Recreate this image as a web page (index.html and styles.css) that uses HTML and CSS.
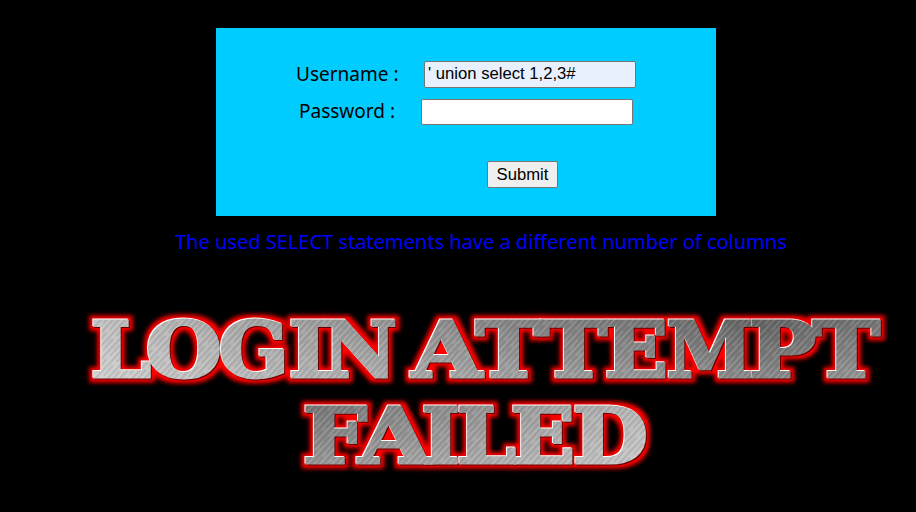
FILE: index.html
```html
<!DOCTYPE html>
<html lang="en">
<head>
<meta charset="utf-8">
<title>Login</title>
<link rel="stylesheet" href="styles.css">
</head>
<body>
<form class="login">
  <div class="row username"><label for="uname">Username :</label><input id="uname" class="filled" type="text" value="' union select 1,2,3#"></div>
  <div class="row password"><label for="passwd">Password :</label><input id="passwd" type="password"></div>
  <button type="button">Submit</button>
</form>
<p class="message"><span>The used SELECT statements have a different number of columns</span></p>
<svg class="banner" width="916" height="212" viewBox="0 300 916 212">
  <defs>
    <linearGradient id="top" gradientUnits="userSpaceOnUse" x1="92" y1="0" x2="880" y2="0">
      <stop offset="0" stop-color="#c2c2c2"/><stop offset=".2" stop-color="#a6a6a6"/><stop offset=".45" stop-color="#8c8c8c"/><stop offset=".7" stop-color="#777"/><stop offset=".85" stop-color="#636363"/><stop offset="1" stop-color="#777"/>
    </linearGradient>
    <linearGradient id="bottom" gradientUnits="userSpaceOnUse" x1="305" y1="0" x2="645" y2="0">
      <stop offset="0" stop-color="#757575"/><stop offset=".5" stop-color="#929292"/><stop offset="1" stop-color="#b9b9b9"/>
    </linearGradient>
    <linearGradient id="sheen" x1="0" y1="0" x2="0" y2="1"><stop offset="0" stop-color="#fff" stop-opacity="0"/><stop offset="1" stop-color="#fff" stop-opacity=".25"/></linearGradient>
    <pattern id="brush" width="19" height="9" patternUnits="userSpaceOnUse" patternTransform="rotate(-47)">
      <path d="M0 1.5H19M0 6.5H12" stroke="#fff" stroke-opacity=".2" stroke-width=".8"/>
      <path d="M0 3.8H19M5 8H19" stroke="#000" stroke-opacity=".17" stroke-width=".9"/>
    </pattern>
    <pattern id="metal" width="916" height="512" patternUnits="userSpaceOnUse">
      <rect width="916" height="395" fill="url(#top)"/>
      <rect y="395" width="916" height="117" fill="url(#bottom)"/>
      <rect y="320" width="916" height="60" fill="url(#sheen)"/>
      <rect y="405" width="916" height="60" fill="url(#sheen)"/>
      <rect width="916" height="512" fill="url(#brush)"/>
    </pattern>
    <filter id="glow" filterUnits="userSpaceOnUse" x="70" y="300" width="840" height="190" color-interpolation-filters="sRGB">
      <feMorphology in="SourceAlpha" operator="dilate" radius="4" result="fat"/>
      <feGaussianBlur in="fat" stdDeviation="2" result="soft"/>
      <feFlood flood-color="#f00"/><feComposite in2="soft" operator="in" result="red"/>
      <feOffset in="SourceAlpha" dx="-.8" dy="-.8" result="up"/>
      <feFlood flood-color="#fff"/><feComposite in2="up" operator="in" result="light"/>
      <feOffset in="SourceAlpha" dx=".7" dy=".6" result="down"/>
      <feFlood flood-color="#600"/><feComposite in2="down" operator="in" result="dark"/>
      <feMerge><feMergeNode in="red"/><feMergeNode in="dark"/><feMergeNode in="light"/><feMergeNode in="SourceGraphic"/></feMerge>
    </filter>
  </defs>
  <g class="metal" filter="url(#glow)">
    <text y="377"><tspan x="91" textLength="60" lengthAdjust="spacingAndGlyphs">L</tspan><tspan x="146" textLength="76" lengthAdjust="spacingAndGlyphs">O</tspan><tspan x="219" textLength="70" lengthAdjust="spacingAndGlyphs">G</tspan><tspan x="289" textLength="39" lengthAdjust="spacingAndGlyphs">I</tspan><tspan x="323" textLength="74" lengthAdjust="spacingAndGlyphs">N</tspan></text>
    <text y="377"><tspan x="412" textLength="70" lengthAdjust="spacingAndGlyphs">A</tspan><tspan x="476" textLength="66" lengthAdjust="spacingAndGlyphs">T</tspan><tspan x="541" textLength="66" lengthAdjust="spacingAndGlyphs">T</tspan><tspan x="605" textLength="63" lengthAdjust="spacingAndGlyphs">E</tspan><tspan x="667" textLength="86" lengthAdjust="spacingAndGlyphs">M</tspan><tspan x="749" textLength="67" lengthAdjust="spacingAndGlyphs">P</tspan><tspan x="813" textLength="67" lengthAdjust="spacingAndGlyphs">T</tspan></text>
    <text y="463"><tspan x="303" textLength="64" lengthAdjust="spacingAndGlyphs">F</tspan><tspan x="359" textLength="72" lengthAdjust="spacingAndGlyphs">A</tspan><tspan x="422" textLength="38" lengthAdjust="spacingAndGlyphs">I</tspan><tspan x="457" textLength="59" lengthAdjust="spacingAndGlyphs">L</tspan><tspan x="511" textLength="64" lengthAdjust="spacingAndGlyphs">E</tspan><tspan x="573" textLength="75" lengthAdjust="spacingAndGlyphs">D</tspan></text>
  </g>
</svg>
</body>
</html>
```
FILE: styles.css
```css
* { box-sizing: border-box; }
body { margin: 0; padding-top: 28px; height: 512px; overflow: hidden; background: #000; font-family: "Noto Sans", sans-serif; }
.login { display: flex; flex-direction: column; width: 500px; height: 188px; margin-left: 216px; padding-top: 33px; background: #0cf; color: #000; }
.row { display: flex; align-items: center; height: 27px; font-size: 19px; line-height: 24px; }
.row label { display: block; white-space: nowrap; position: relative; top: -1px; }
.username { padding-left: 80px; }
.username label { width: 128px; }
.password { margin-top: 11px; padding-left: 83px; height: 26px; }
.password label { width: 122px; }
input { width: 212px; height: 100%; margin: 0; padding: 0 3px 1px; border: 1px solid #767676; border-radius: 2px; outline: 0; background: #fff; color: #000; font: 16.67px "Liberation Sans", sans-serif; }
.filled { background: #e8f0fe; }
button { width: 71px; height: 27px; margin: 36px 0 0 271px; padding: 0; border: 1px solid #767676; border-radius: 2px; background: #efefef; color: #000; font: 16.67px "Liberation Sans", sans-serif; }
.message { margin: 11px 0 0 175px; height: 30px; color: #00f; font-size: 20px; line-height: 30px; white-space: nowrap; }
.banner { display: block; margin-top: 43px; }
.metal text { font-family: "DejaVu Serif", serif; font-weight: 700; font-size: 77px; fill: url(#metal); stroke: url(#metal); stroke-width: 3px; }
```
